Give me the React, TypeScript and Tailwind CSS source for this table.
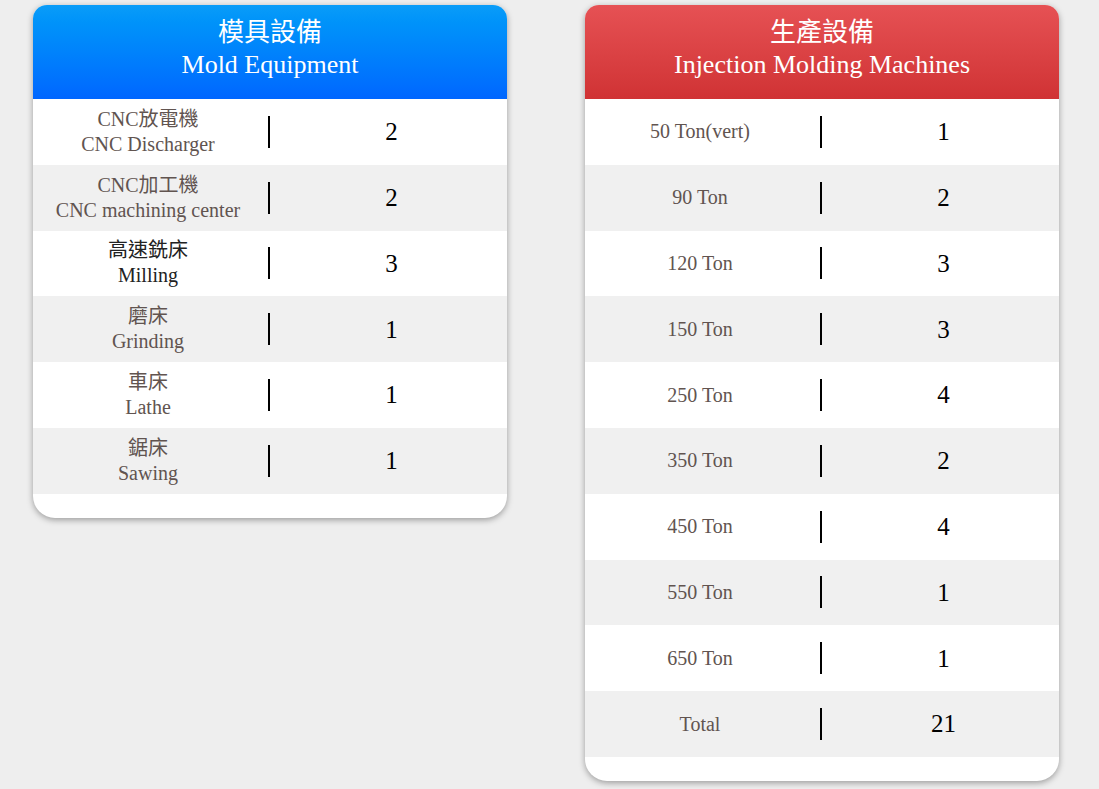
type Row = { zh?: string; en: string; value: string; dark?: boolean };

const mold: Row[] = [
  { zh: "CNC放電機", en: "CNC Discharger", value: "2" },
  { zh: "CNC加工機", en: "CNC machining center", value: "2" },
  { zh: "高速銑床", en: "Milling", value: "3", dark: true },
  { zh: "磨床", en: "Grinding", value: "1" },
  { zh: "車床", en: "Lathe", value: "1" },
  { zh: "鋸床", en: "Sawing", value: "1" },
];

const injection: Row[] = [
  { en: "50 Ton(vert)", value: "1" },
  { en: "90 Ton", value: "2" },
  { en: "120 Ton", value: "3" },
  { en: "150 Ton", value: "3" },
  { en: "250 Ton", value: "4" },
  { en: "350 Ton", value: "2" },
  { en: "450 Ton", value: "4" },
  { en: "550 Ton", value: "1" },
  { en: "650 Ton", value: "1" },
  { en: "Total", value: "21" },
];

function Card({
  zh,
  en,
  headerClass,
  rows,
}: {
  zh: string;
  en: string;
  headerClass: string;
  rows: Row[];
}) {
  return (
    <div className="w-[474px] overflow-hidden rounded-t-[14px] rounded-b-[22px] bg-white pb-[24px] shadow-[0_2px_6px_rgba(0,0,0,0.35)]">
      <div className={`flex h-[94px] flex-col items-center justify-center pb-[6px] text-white ${headerClass}`}>
        <div className="text-[26px] leading-[32px]">{zh}</div>
        <div className="text-[26px] leading-[32px]">{en}</div>
      </div>
      {rows.map((row, i) => (
        <div
          key={row.en}
          className={`flex h-[65.8px] items-center ${i % 2 === 1 ? "bg-[#f0f0f0]" : "bg-white"}`}
        >
          <div
            className={`flex w-[230px] flex-col items-center text-[20px] leading-[25px] ${
              row.dark ? "text-[#222]" : "text-[#615450]"
            }`}
          >
            {row.zh && <span>{row.zh}</span>}
            <span>{row.en}</span>
          </div>
          <div className="ml-[5px] h-[32px] w-[2px] bg-black" />
          <div className="flex-1 pl-[6px] text-center text-[25px] text-black">{row.value}</div>
        </div>
      ))}
    </div>
  );
}

export default function App() {
  return (
    <div
      className="min-h-[789px] bg-[#eeeeee]"
      style={{ fontFamily: '"Liberation Serif", "Noto Sans CJK TC", serif' }}
    >
      <div className="flex items-start gap-[78px] pl-[33px] pt-[5px]">
        <Card
          zh="模具設備"
          en="Mold Equipment"
          headerClass="bg-gradient-to-b from-[#0a9cf8] to-[#0066ff]"
          rows={mold}
        />
        <Card
          zh="生產設備"
          en="Injection Molding Machines"
          headerClass="bg-gradient-to-b from-[#e65154] to-[#d03234]"
          rows={injection}
        />
      </div>
    </div>
  );
}
